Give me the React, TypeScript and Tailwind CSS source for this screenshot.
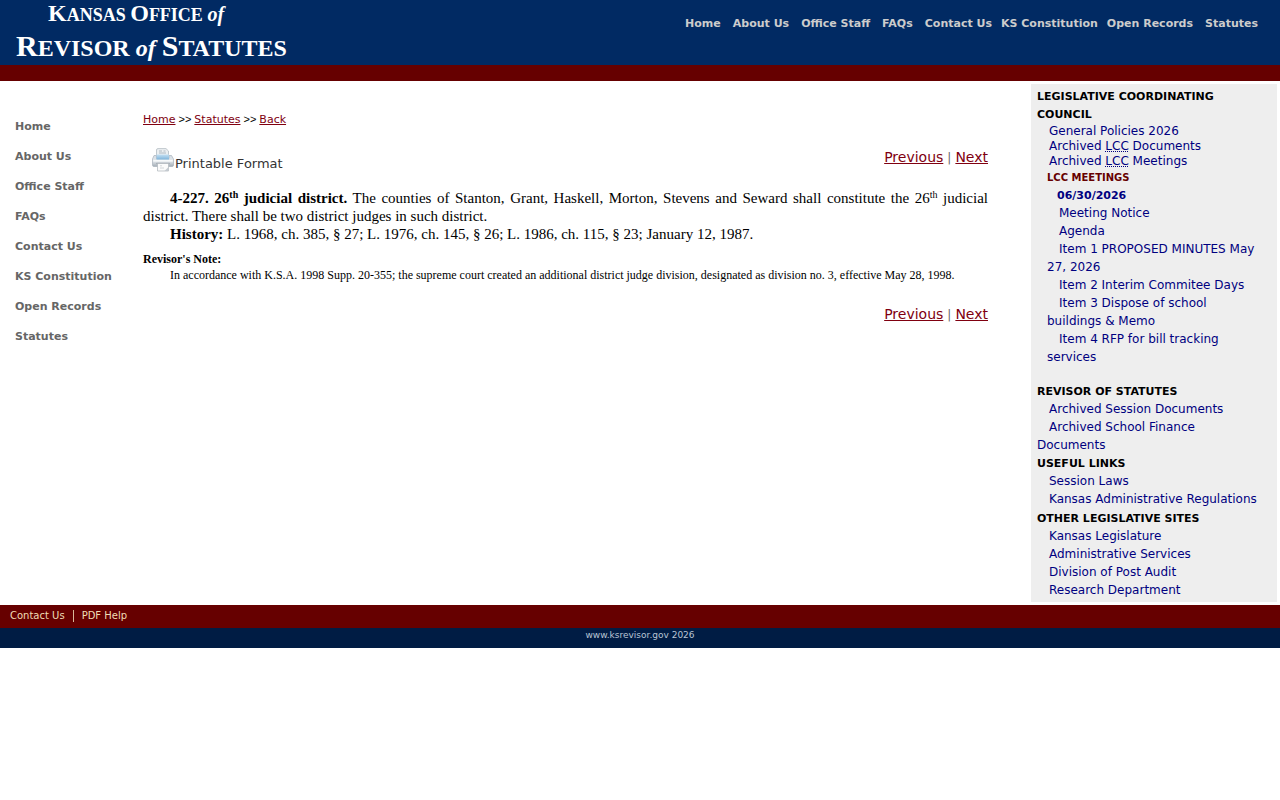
import { Fragment } from "react";

const NAV_LINKS = [
  "Home",
  "About Us",
  "Office Staff",
  "FAQs",
  "Contact Us",
  "KS Constitution",
  "Open Records",
  "Statutes",
];

const MEETING_ITEMS = [
  "Meeting Notice",
  "Agenda",
  "Item 1 PROPOSED MINUTES May 27, 2026",
  "Item 2 Interim Commitee Days",
  "Item 3 Dispose of school buildings & Memo",
  "Item 4 RFP for bill tracking services",
];

const REVISOR_LINKS = ["Archived Session Documents", "Archived School Finance Documents"];
const USEFUL_LINKS = ["Session Laws", "Kansas Administrative Regulations"];
const OTHER_SITES = [
  "Kansas Legislature",
  "Administrative Services",
  "Division of Post Audit",
  "Research Department",
];

function PrinterIcon() {
  return (
    <svg width="24" height="24" viewBox="0 0 24 24" aria-hidden="true">
      <defs>
        <linearGradient id="body" x1="0" y1="0" x2="0" y2="1">
          <stop offset="0" stopColor="#d5dde4" />
          <stop offset="0.5" stopColor="#e3e8ec" />
          <stop offset="1" stopColor="#a3adb6" />
        </linearGradient>
        <linearGradient id="tray" x1="0" y1="0" x2="0" y2="1">
          <stop offset="0" stopColor="#c4e0f3" />
          <stop offset="1" stopColor="#7fb4da" />
        </linearGradient>
      </defs>
      <path d="M5.500 9V2Q5.500 .6 7 .6h8l2.500 2.400V9z" fill="#eceff1" stroke="#b4bcc3" strokeWidth="0.8" />
      <path d="M8 3h3M12.500 3h2M8 5h7" stroke="#a9b4be" strokeWidth="0.9" />
      <path d="M3 7.500h2.500v3h12.500v-3h2.500l2 3.500v6q0 1.500-1.500 1.500H3q-1.500 0-1.500-1.500v-6z" fill="url(#body)" stroke="#a9b2bb" strokeWidth="0.7" />
      <path d="M5.500 6.500h12.500v5h-12.500z" fill="url(#tray)" />
      <path d="M2.300 12.800h19.400" stroke="#f7f9fa" strokeWidth="1.600" />
      <path d="M5.500 15.500h13" stroke="#8a939c" strokeWidth="1.200" />
      <path d="M6.500 15.500h11v7.500h-11z" fill="#fbfbfb" stroke="#b6bcc1" strokeWidth="0.8" />
      <path d="M9 17.800h2M9 20h4" stroke="#c9ced2" strokeWidth="0.8" />
      <path d="M13.500 23 17.500 19v4z" fill="#c4cad0" />
    </svg>
  );
}

function Pager() {
  return (
    <div className="text-right text-[14px] leading-[18px] text-[#666]">
      <a href="#previous" className="text-[#800010] underline">Previous</a>
      <span className="px-1 text-[12px]">|</span>
      <a href="#next" className="text-[#800010] underline">Next</a>
    </div>
  );
}

function SideHeading({ children }: { children: string }) {
  return <h2 className="pt-px text-[11px] leading-[17px] font-bold text-black">{children}</h2>;
}

function SideLinks({ links }: { links: string[] }) {
  return (
    <ul className="text-[12px] leading-[18px]">
      {links.map((l) => (
        <li key={l} className="indent-3">
          <a href="#">{l}</a>
        </li>
      ))}
    </ul>
  );
}

export default function App() {
  return (
    <div className="bg-white text-black font-['DejaVu_Sans',sans-serif]">
      {/* HEADER */}
      <header className="flex h-[81px] items-start justify-between border-b-16 border-[#660000] bg-[#012a63]">
        <h1 className="pl-4 font-['Liberation_Serif',serif] font-bold text-white">
          <span className="block pl-8 text-[18px] leading-[26px]">
            <span className="text-[24px]">K</span>ANSAS <span className="text-[24px]">O</span>FFICE{" "}
            <i className="text-[20px]">of</i>
          </span>
          <span className="block text-[24px] leading-[36px]">
            <span className="text-[30px]">R</span>EVISOR <i>of</i>{" "}
            <span className="text-[30px]">S</span>TATUTES
          </span>
        </h1>
        <nav className="flex pt-[15px] pr-4 text-[11px] leading-[18px] font-bold whitespace-nowrap text-[#cccccc]">
          {NAV_LINKS.map((l) => (
            <a key={l} href="#" className={l === "KS Constitution" ? "px-[3px]" : "px-1.5"}>
              {l}
            </a>
          ))}
        </nav>
      </header>

      <div className="flex items-start">
        {/* LEFT MENU */}
        <nav className="w-[143px] shrink-0 pt-[31px] pl-[15px] text-[11px] leading-[30px] font-bold text-[#666]">
          {NAV_LINKS.map((l) => (
            <a key={l} href="#" className="block">{l}</a>
          ))}
        </nav>

        {/* STATUTE */}
        <main className="min-w-0 flex-1 pt-[29px] pr-10">
          <div className="text-[11px] leading-[18px]">
            {["Home", "Statutes", "Back"].map((l, i) => (
              <Fragment key={l}>
                {i > 0 && (
                  <span className="px-[3px] font-['Liberation_Sans',sans-serif]">&gt;&gt;</span>
                )}
                <a href="#" className="text-[#800010] underline">{l}</a>
              </Fragment>
            ))}
          </div>

          <div className="flex items-start justify-between pt-[19px]">
            <a href="#print" className="flex items-start pl-2 text-[13px] leading-[24px] text-[#333]">
              <PrinterIcon />
              <span className="pt-1">Printable Format</span>
            </a>
            <Pager />
          </div>

          <article className="pt-[13px] font-['Liberation_Serif',serif]">
            <div className="text-justify indent-[27px] text-[15px] leading-[18px]">
              <p>
                <b>
                  4-227. 26<sup className="text-[10px]">th</sup> judicial district.
                </b>{" "}
                The counties of Stanton, Grant, Haskell, Morton, Stevens and Seward shall constitute the
                26<sup className="text-[10px]">th</sup> judicial district. There shall be two district
                judges in such district.
              </p>
              <p>
                <b>History:</b> L. 1968, ch. 385, § 27; L. 1976, ch. 145, § 26; L. 1986, ch. 115, § 23;
                January 12, 1987.
              </p>
            </div>
            <div className="pt-2 text-[12px] leading-[16px]">
              <p className="font-bold">Revisor's Note:</p>
              <p className="indent-[27px]">
                In accordance with K.S.A. 1998 Supp. 20-355; the supreme court created an additional
                district judge division, designated as division no. 3, effective May 28, 1998.
              </p>
            </div>
          </article>

          <div className="pt-[22px]">
            <Pager />
          </div>
        </main>

        {/* RIGHT SIDEBAR */}
        <aside className="m-[3px] w-[246px] shrink-0 bg-[#eeeeee] py-[3px] pr-4 pl-1.5 text-[#000080]">
          <h2 className="pt-px text-[11px] leading-[18px] font-bold text-black">
            LEGISLATIVE COORDINATING COUNCIL
          </h2>
          <ul className="pl-3 text-[12px] leading-[15px]">
            <li><a href="#">General Policies 2026</a></li>
            <li>
              <a href="#">
                Archived <abbr title="Legislative Coordinating Council">LCC</abbr> Documents
              </a>
            </li>
            <li>
              <a href="#">
                Archived <abbr title="Legislative Coordinating Council">LCC</abbr> Meetings
              </a>
            </li>
          </ul>
          <section className="pb-4 pl-2.5">
            <h3 className="text-[10px] leading-[18px] font-bold text-[#660000]">LCC MEETINGS</h3>
            <h4 className="pl-2.5 text-[11px] leading-[17px] font-bold">06/30/2026</h4>
            <SideLinks links={MEETING_ITEMS} />
          </section>

          <SideHeading>REVISOR OF STATUTES</SideHeading>
          <SideLinks links={REVISOR_LINKS} />
          <SideHeading>USEFUL LINKS</SideHeading>
          <SideLinks links={USEFUL_LINKS} />
          <div className="pt-px">
            <SideHeading>OTHER LEGISLATIVE SITES</SideHeading>
            <SideLinks links={OTHER_SITES} />
          </div>
        </aside>
      </div>

      {/* FOOTER */}
      <footer>
        <div className="flex h-[23px] items-center bg-[#660000] px-2.5 pb-0.5 text-[10px] text-[#f0dcb4]">
          <a href="#">Contact Us</a>
          <span className="mx-2 h-3 w-px bg-[#d8b898]" />
          <a href="#">PDF Help</a>
        </div>
        <div className="h-5 bg-[#001c44] text-center text-[9px] leading-[14px] text-[#b8c4d4]">
          www.ksrevisor.gov 2026
        </div>
      </footer>
    </div>
  );
}
